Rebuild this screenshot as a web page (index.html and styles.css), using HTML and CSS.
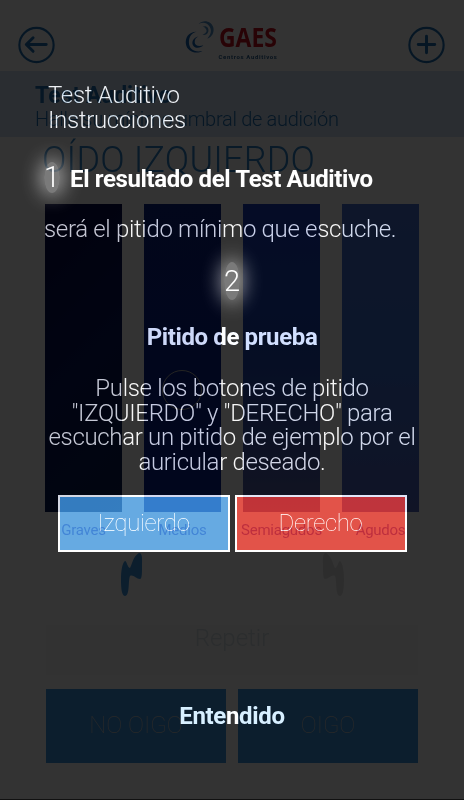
FILE: index.html
```html
<!DOCTYPE html>
<html lang="es">
<head>
    <meta charset="UTF-8">
    <meta name="viewport" content="width=device-width, initial-scale=1.0">
    <title>Test Auditivo</title>
    <link rel="stylesheet" href="styles.css">
</head>
<body>
    <div class="screen">
        <header class="header">
            <svg class="icon" viewBox="0 0 38 38">
                <circle cx="19" cy="19" r="17.6"/>
                <path class="stroke-thick" d="M29 18.5H9M15.5 11.5L8.5 18.5L15.5 25.5"/>
            </svg>
            <div class="logo">
                <svg class="logo-mark" viewBox="0 0 32 36">
                    <path d="M12 12C3 12 0 19 1 25C2 32 11 36 18 32C10 34 4 30 4 23C4 17 7 13 12 12Z"/>
                    <path d="M14 17C8 18 6 24 9 27C12 30 17 28 19 26C14 28 10 26 10 23C10 20 11 18 14 17Z"/>
                    <path class="mark-light" d="M14 4C19 -1 27 1 29 7C31 13 27 18 23 19C27 15 28 10 25 6C22 2 18 2 14 4Z"/>
                    <path class="mark-light" d="M18 7C22 5 25 8 24 12C23 15 20 16 18 15C21 14 23 12 22 10C21 8 20 7 18 7Z"/>
                </svg>
                <div class="logo-text">
                    <div class="logo-name">GAES</div>
                    <div class="logo-sub">Centros Auditivos</div>
                </div>
            </div>
            <svg class="icon" viewBox="0 0 38 38">
                <circle cx="19" cy="19" r="17.6"/>
                <path class="stroke-thick" d="M10.5 18.5H27.5M19 10V27"/>
            </svg>
        </header>

        <div class="subheader">
            <div class="subheader-title">Test Auditivo</div>
            <div class="subheader-text">Halle su mínimo umbral de audición</div>
        </div>

        <h1 class="ear-title">OÍDO IZQUIERDO</h1>

        <div class="bars">
            <div class="bar-item"><div class="bar bar-graves"></div><span>Graves</span></div>
            <div class="bar-item"><div class="bar bar-medios"><i class="knob"></i></div><span>Medios</span></div>
            <div class="bar-item"><div class="bar bar-semiagudos"></div><span>Semiagudos</span></div>
            <div class="bar-item"><div class="bar bar-agudos"></div><span>Agudos</span></div>
        </div>

        <div class="ears">
            <svg class="ear" viewBox="0 0 22 44">
                <path d="M4 8C6 8 6 14 9 15C11 12 12 3 18 0C22 0 21 8 21 14C21 20 21 26 19 26C15 26 12 21 9 23C7 28 9 43 4 43C0 43 0 31 0 26C0 19 1 10 4 8Z"/>
            </svg>
            <svg class="ear ear-off" viewBox="0 0 22 44">
                <path d="M4 8C6 8 6 14 9 15C11 12 12 3 18 0C22 0 21 8 21 14C21 20 21 26 19 26C15 26 12 21 9 23C7 28 9 43 4 43C0 43 0 31 0 26C0 19 1 10 4 8Z"/>
            </svg>
        </div>

        <div class="repeat">Repetir</div>

        <div class="answers">
            <div class="answer">NO OIGO</div>
            <div class="answer">OIGO</div>
        </div>
    </div>

    <div class="overlay">
        <div class="intro">Test Auditivo<br>Instrucciones</div>

        <div class="step">
            <span class="number number-one">1</span>
            <strong class="step-title">El resultado del Test Auditivo</strong>
        </div>
        <p class="result">será el pitido mínimo que escuche.</p>

        <span class="number number-two">2</span>
        <strong class="beep-title">Pitido de prueba</strong>
        <p class="beep-text">Pulse los botones de pitido<br>"IZQUIERDO" y "DERECHO" para<br>escuchar un pitido de ejemplo por el<br>auricular deseado.</p>

        <div class="beep-buttons">
            <button class="beep beep-left">Izquierdo</button>
            <button class="beep beep-right">Derecho</button>
        </div>

        <button class="ok">Entendido</button>
    </div>
</body>
</html>
```
FILE: styles.css
```css
* {
    box-sizing: border-box;
}

body {
    margin: 0;
    background: #fff;
    font-family: Roboto, sans-serif;
    font-weight: 300;
    width: 464px;
    height: 800px;
    position: relative;
    overflow: hidden;
}

.screen {
    height: 800px;
    border-bottom: 1px solid #555;
}

.header {
    height: 71px;
    padding: 18px 19px 0 18px;
    display: flex;
    justify-content: space-between;
    align-items: flex-start;
}

.icon {
    width: 37px;
    height: 54px;
    fill: none;
    stroke: #1e70b4;
    stroke-width: 2.2;
    stroke-linecap: round;
    stroke-linejoin: round;
}

.stroke-thick {
    stroke-width: 3;
}

.logo {
    display: flex;
    gap: 3px;
    padding-top: 2px;
}

.logo-mark {
    width: 31px;
    height: 35px;
    fill: #1464b4;
}

.mark-light {
    fill: #5090c8;
}

.logo-name {
    color: #c81020;
    font-family: "Open Sans", sans-serif;
    font-weight: 700;
    font-size: 27px;
    line-height: 34px;
    height: 32px;
    width: 60px;
    transform: scaleX(0.85);
    transform-origin: left;
}

.logo-sub {
    color: #2b6090;
    font-weight: 700;
    font-size: 6px;
    line-height: 9px;
    letter-spacing: 0.65px;
    white-space: nowrap;
}

.subheader {
    height: 66px;
    background: #d2e1f5;
    padding: 13px 35px 0;
    color: #1e70b4;
}

.subheader-title {
    font-size: 23px;
    font-weight: 700;
    line-height: 24px;
}

.subheader-text {
    font-size: 20px;
    line-height: 22px;
    letter-spacing: -0.29px;
}

.ear-title {
    margin: 0 0 0 42px;
    height: 67px;
    padding-top: 2px;
    color: #2d82c8;
    font-size: 36px;
    font-weight: 300;
    line-height: 42px;
    letter-spacing: 0.2px;
}

.bars {
    display: flex;
    gap: 22px;
    padding-left: 45px;
}

.bar-item {
    width: 77px;
    display: flex;
    flex-direction: column;
    align-items: center;
    color: #4b46c3;
    font-size: 15px;
    font-weight: 400;
}

.bar-item span {
    line-height: 18px;
    margin-top: 9px;
    letter-spacing: -0.25px;
}

.bar {
    width: 77px;
    height: 308px;
}

.bar-graves {
    background: linear-gradient(135deg, #050a46, #05145a 50%, #0a1e50);
}

.bar-medios {
    background: linear-gradient(#0a2387, #081e91);
    padding: 166px 0 0 18px;
}

.bar-semiagudos {
    background: linear-gradient(#193cbe, #1e46b4 50%, #5a64aa);
}

.bar-agudos {
    background: linear-gradient(#466ed2, #3c6ed2 50%, #5064be);
}

.knob {
    display: block;
    width: 40px;
    height: 40px;
    border: 1px solid #b4b4aa;
    border-radius: 50%;
}

.ears {
    display: flex;
    justify-content: space-between;
    padding: 14px 120px 0 121px;
}

.ear {
    width: 22px;
    height: 44px;
    fill: #3c96e1;
}

.ear-off {
    fill: #e2e2e2;
    transform: scaleX(-1);
}

.repeat {
    margin: 28px 46px 0;
    height: 50px;
    background: #f8f8f8;
    color: #d5dfe5;
    text-align: center;
    font-size: 24px;
    line-height: 26px;
}

.answers {
    display: flex;
    gap: 12px;
    margin: 14px 46px 0;
}

.answer {
    width: 180px;
    height: 74px;
    background: #3c96e1;
    color: #c8c8c8;
    text-align: center;
    font-size: 24px;
    font-weight: 100;
    line-height: 72px;
}

.overlay {
    position: absolute;
    inset: 0;
    background: rgba(0, 0, 0, 0.8);
    color: #c4c4c4;
    font-size: 24px;
    line-height: 24.5px;
    letter-spacing: -0.33px;
    padding: 83px 44px 0;
    display: flex;
    flex-direction: column;
    align-items: center;
}

/* light content is added on top of the darkened page */
.intro,
.result,
.beep-title,
.beep-text,
.beep,
.ok {
    mix-blend-mode: plus-lighter;
}

.intro {
    align-self: flex-start;
    padding-left: 4px;
}

.step {
    align-self: flex-start;
    display: flex;
    align-items: center;
    gap: 10px;
    margin-top: 30px;
    white-space: nowrap;
}

.number {
    color: #fff;
    border-radius: 50%;
    background: rgba(255, 255, 255, 0.35);
    box-shadow: 0 0 20px 3px rgba(255, 255, 255, 0.6);
    font-size: 29px;
    letter-spacing: 0;
}

.number-one {
    line-height: 31px;
}

.number-two {
    line-height: 38px;
    margin-top: 20px;
}

strong {
    color: #fff;
    font-weight: 700;
    letter-spacing: -0.38px;
}

.step-title {
    padding-top: 3px;
}

.result {
    align-self: flex-start;
    margin: 24px 0 0;
    white-space: nowrap;
}

.beep-title {
    margin-top: 25px;
    color: #ccd2dc;
}

.beep-text {
    margin: 27px -10px 0;
    text-align: center;
    white-space: nowrap;
}

.beep-buttons {
    display: flex;
    gap: 5px;
    margin-top: 21px;
}

button {
    border: none;
    background: none;
    padding: 0;
    font: inherit;
    letter-spacing: inherit;
}

.beep {
    width: 172px;
    height: 57px;
    border: 2px solid #d2d2d2;
    font-size: 24px;
    font-weight: 100;
    color: #d2d2d2;
}

.beep-left {
    background: #3377af;
}

.beep-right {
    background: #af2016;
}

.ok {
    color: #ccd2d7;
    font-weight: 700;
    margin-top: 152px;
}
```
